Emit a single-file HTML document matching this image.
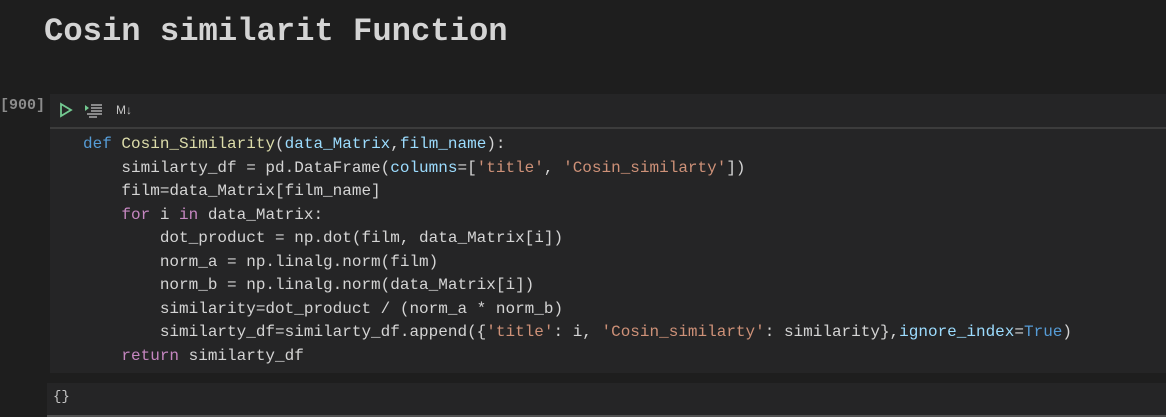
<!DOCTYPE html><html><head><style>
body{margin:0;width:1166px;height:417px;background:#1e1e1e;overflow:hidden;position:relative;font-family:"Liberation Mono",monospace}
.t{position:absolute;left:44px;top:10px;font-size:32.2px;font-weight:bold;color:#d4d4d4;line-height:44px}
.cnt{position:absolute;left:0;top:97px;font-size:15px;color:#8c8c8c;font-weight:bold}
.cell{position:absolute;left:50px;top:94px;width:1116px;height:279px;background:#252526}
.bar{position:absolute;left:50px;top:127px;width:1116px;height:2px;background:#3c3c3c}
pre{position:absolute;left:83px;top:133px;margin:0;font-family:"Liberation Mono",monospace;font-size:16px;line-height:23.5px;color:#d4d4d4}
.k{color:#569cd6}.f{color:#dcdcaa}.p{color:#9cdcfe}.s{color:#ce9178}.c{color:#c586c0}
.out{position:absolute;left:47px;top:383px;width:1119px;height:32px;background:#252526}
.line{position:absolute;left:47px;top:415px;width:1119px;height:2px;background:#505050}
</style></head><body>
<div class="t">Cosin similarit Function</div>
<div class="cnt">[900]</div>
<div class="cell"></div>
<svg style="position:absolute;left:58px;top:101px" width="80" height="18">
<path d="M3 3 L13 9 L3 15 Z" fill="none" stroke="#73c991" stroke-width="1.8"/>
<path d="M27 4 L31 7 L27 10 Z" fill="#73c991"/>
<path d="M33 4h11M33 7h11M33 10h11M29 13h15M31 16h8" stroke="#c5c5c5" stroke-width="1.2"/>
<text x="58" y="13" font-family="Liberation Sans" font-size="12" fill="#c5c5c5">M↓</text>
</svg>
<div class="bar"></div>
<pre><span class="k">def</span> <span class="f">Cosin_Similarity</span>(<span class="p">data_Matrix</span>,<span class="p">film_name</span>):
    similarty_df = pd.DataFrame(<span class="p">columns</span>=[<span class="s">'title'</span>, <span class="s">'Cosin_similarty'</span>])
    film=data_Matrix[film_name]
    <span class="c">for</span> i <span class="c">in</span> data_Matrix:
        dot_product = np.dot(film, data_Matrix[i])
        norm_a = np.linalg.norm(film)
        norm_b = np.linalg.norm(data_Matrix[i])
        similarity=dot_product / (norm_a * norm_b)
        similarty_df=similarty_df.append({<span class="s">'title'</span>: i, <span class="s">'Cosin_similarty'</span>: similarity},<span class="p">ignore_index</span>=<span class="k">True</span>)
    <span class="c">return</span> similarty_df</pre>
<div class="out"><span style="position:absolute;left:6px;top:6px;font-size:14px;color:#c5c5c5">{}</span></div>
<div class="line"></div>
</body></html>
